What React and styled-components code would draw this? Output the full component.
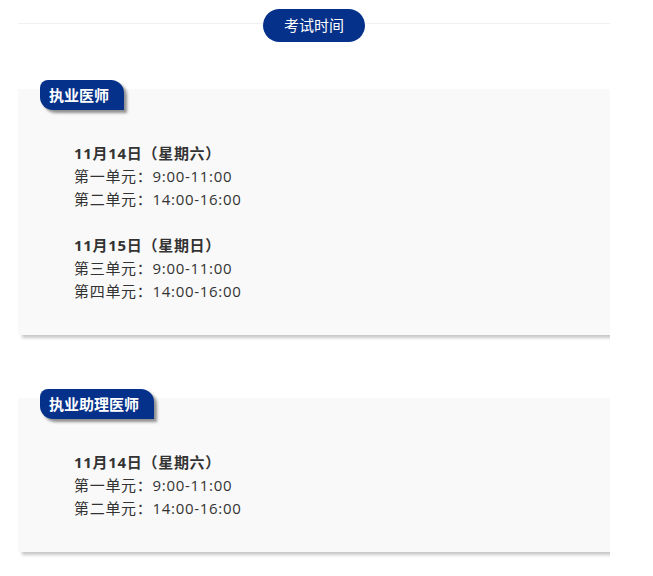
import React from "react";
import styled, { createGlobalStyle } from "styled-components";

const GlobalStyle = createGlobalStyle`
  body {
    margin: 0;
    background: #fff;
    font-family: "Open Sans", "Noto Sans CJK SC", sans-serif;
    color: #333;
  }
`;

const schedules = [
  {
    title: "执业医师",
    days: [
      {
        date: "11月14日（星期六）",
        units: ["第一单元：9:00-11:00", "第二单元：14:00-16:00"],
      },
      {
        date: "11月15日（星期日）",
        units: ["第三单元：9:00-11:00", "第四单元：14:00-16:00"],
      },
    ],
  },
  {
    title: "执业助理医师",
    days: [
      {
        date: "11月14日（星期六）",
        units: ["第一单元：9:00-11:00", "第二单元：14:00-16:00"],
      },
    ],
  },
];

function App() {
  return (
    <Page>
      <GlobalStyle />
      <Heading>
        <HeadingPill>考试时间</HeadingPill>
      </Heading>

      {schedules.map((s, i) => (
        <Card key={i}>
          <Tag>{s.title}</Tag>
          {s.days.map((d, j) => (
            <Day key={j}>
              <DayTitle>{d.date}</DayTitle>
              {d.units.map((u, k) => (
                <Line key={k}>{u}</Line>
              ))}
            </Day>
          ))}
        </Card>
      ))}
    </Page>
  );
}

export default App;

const Page = styled.div`
  width: 592px;
  margin-left: 18px;
  padding-top: 9px;
  padding-bottom: 20px;
`;

const Heading = styled.div`
  position: relative;
  display: flex;
  justify-content: center;

  &::before {
    content: "";
    position: absolute;
    left: 0;
    right: 0;
    top: 14px;
    height: 1px;
    background: #f0f0f0;
  }
`;

const HeadingPill = styled.div`
  position: relative;
  width: 102px;
  height: 33px;
  border-radius: 17px;
  background: #05318a;
  color: #fff;
  font-size: 15px;
  line-height: 33px;
  text-align: center;
`;

const Card = styled.div`
  position: relative;
  margin-top: 47px;
  background: #f9f9f9;
  padding: 53px 0 32px 56px;
  box-shadow: 4px 3px 3px #c8c8c8;
  clip-path: inset(-12px 0 -10px -10px);

  & + & {
    margin-top: 63px;
  }
`;

const Tag = styled.div`
  position: absolute;
  left: 22px;
  top: -9px;
  height: 30px;
  padding: 0 15px 0 9px;
  background: #05318a;
  color: #fff;
  font-size: 15px;
  font-weight: bold;
  line-height: 30px;
  border-radius: 8px 13px 0 13px;
  box-shadow: 3px 3px 3px #8f8f8f;
`;

const Day = styled.div`
  & + & {
    margin-top: 23px;
  }
`;

const DayTitle = styled.div`
  font-size: 15px;
  line-height: 23px;
  font-weight: bold;
  letter-spacing: 0.7px;
`;

const Line = styled.div`
  font-size: 15px;
  line-height: 23px;
  letter-spacing: 0.7px;
`;
